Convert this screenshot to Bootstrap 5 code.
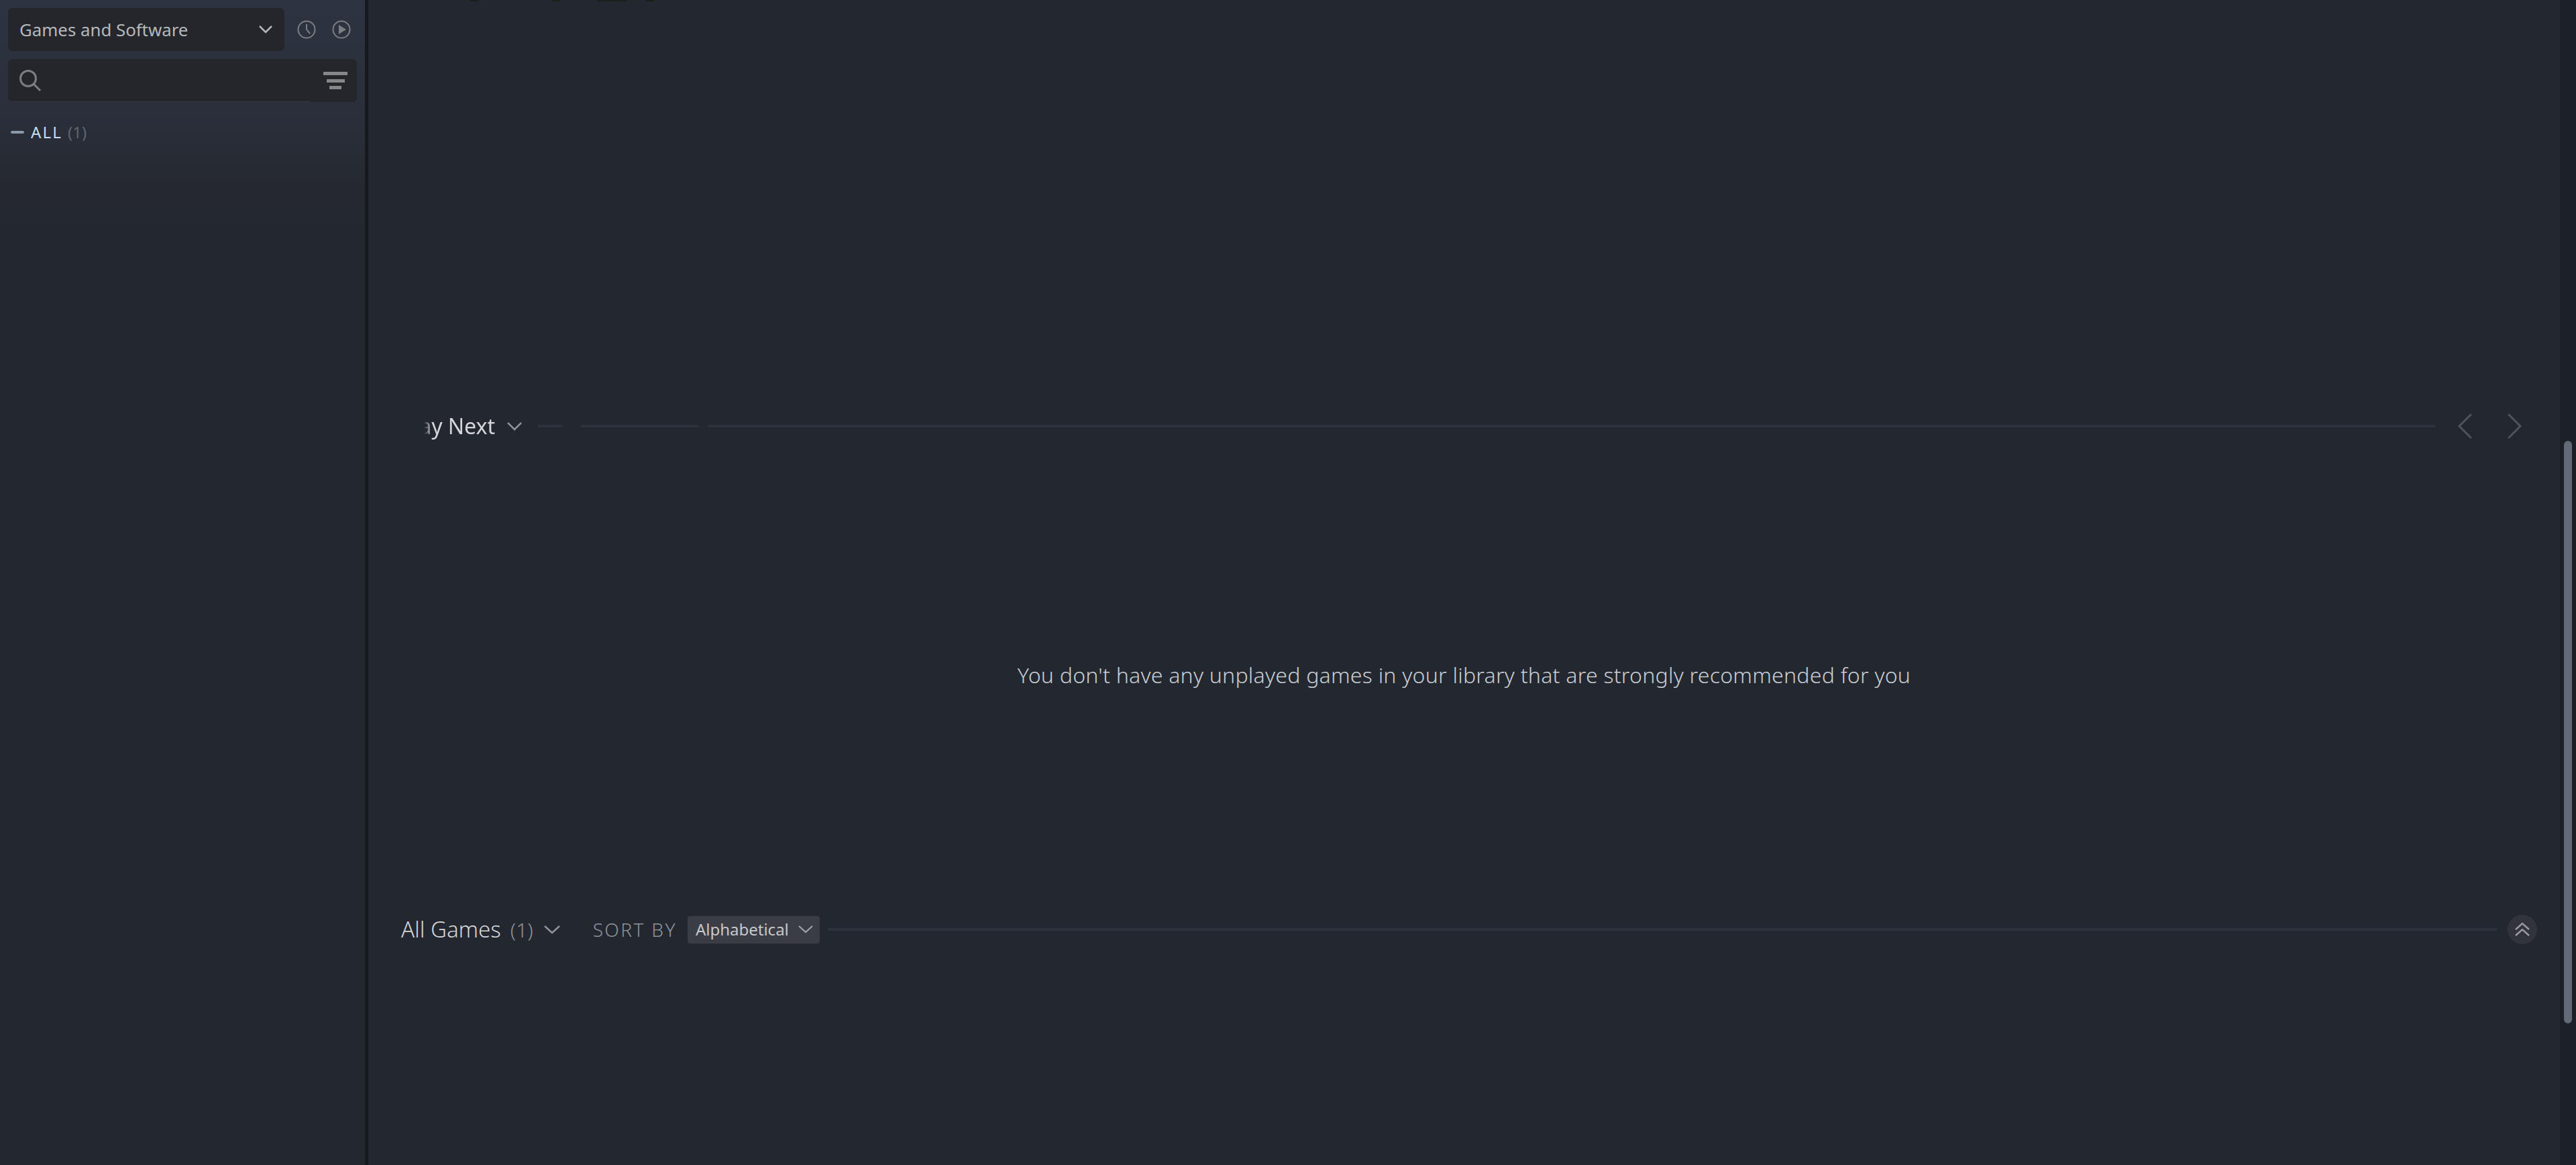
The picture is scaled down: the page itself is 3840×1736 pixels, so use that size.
<!DOCTYPE html>
<html lang="en">
<head>
    <meta charset="UTF-8">
    <meta name="viewport" content="width=device-width, initial-scale=1.0">
    <title>Library</title>
    <link href="https://cdn.jsdelivr.net/npm/bootstrap@5.3.2/dist/css/bootstrap.min.css" rel="stylesheet">
    <style>
        html, body { height: 100%; }
        body {
            background: #23272f;
            font-family: "Noto Sans", "Liberation Sans", sans-serif;
            overflow: hidden;
        }
        .app-shell { height: 1736px; }
        .side-panel {
            width: 544px;
            padding: 12px 12px 0;
            background: linear-gradient(180deg, #2d3340 0, #2a2f3b 170px, #25292f 280px, #23272f 360px, #23272f 100%);
        }
        .side-rule { width: 5px; background: #16181c; }
        .select-box {
            width: 412px;
            height: 64px;
            padding: 0 18px 0 17px;
            background: #24262c;
            border-radius: 6px;
            color: #b5b8bb;
            font-size: 25.8px;
        }
        .head-icons { gap: 24px; padding-left: 19px; }
        .search-box {
            width: 520px;
            height: 64px;
            margin-top: 12px;
            padding: 0 14px 0 16px;
            background: linear-gradient(90deg, #343944 450px, #24262c 450px) bottom / 100% 1px no-repeat, #24262c;
            border-radius: 6px;
        }
        .tree-row {
            margin-top: 31px;
            padding-left: 4px;
            font-size: 24px;
            line-height: 28px;
        }
        .tree-dash { width: 20px; height: 4px; margin-right: 10px; border-radius: 2px; background: #8b98a8; }
        .tree-name { color: #c5dcf2; letter-spacing: 2.2px; }
        .tree-count { color: #5e6570; margin-left: 8px; }
        .top-gap {
            height: 600px;
            background: linear-gradient(90deg, transparent 152px, #17201b 152px, #17201b 164px, transparent 164px, transparent 274px, #17201b 274px, #17201b 286px, transparent 286px, transparent 340px, #17201b 340px, #17201b 386px, transparent 386px, transparent 414px, #17201b 414px, #17201b 426px, transparent 426px) top / 100% 2px no-repeat;
        }
        .next-row { height: 70px; padding-left: 83px; }
        .clip-title {
            width: 106px;
            overflow: hidden;
            direction: rtl;
            white-space: nowrap;
            color: #d4d6d8;
            font-size: 32px;
            -webkit-mask-image: linear-gradient(90deg, transparent 0, #000 12px);
        }
        .title-chevron { margin-left: 18px; }
        .rule-line { height: 4px; background: #2e323c; }
        .rule-broken {
            background: linear-gradient(90deg, #2e323c 34px, transparent 38px, transparent 62px, #2e323c 66px, #2e323c 238px, transparent 240px, transparent 252px, #2e323c 254px);
        }
        .arrow-prev { margin-left: 33px; margin-right: 53px; }
        .arrow-next { margin-right: 56px; }
        .empty-note {
            height: 680px;
            color: #c8cdd3;
            font-size: 32px;
            font-weight: 300;
            letter-spacing: .26px;
            padding-bottom: 8px;
        }
        .games-row { height: 70px; padding-left: 49px; }
        .games-title { color: #d4d6d8; font-size: 33px; font-weight: 300; }
        .games-count { color: #8f9297; font-size: 30px; font-weight: 300; margin-left: 14px; }
        .sort-label { color: #8f9297; font-size: 28px; font-weight: 300; letter-spacing: 2.4px; margin-left: 49px; }
        .sort-pill {
            height: 41px;
            margin-left: 16px;
            padding: 0 10px 0 12px;
            background: #3a3d46;
            border-radius: 4px;
            color: #c6c8cb;
            font-size: 24px;
        }
        .pill-chevron { margin-left: 14px; }
        .games-rule { margin-left: 12px; }
        .round-btn { width: 44px; height: 44px; margin: 0 34px 0 16px; border-radius: 50%; background: #31343d; }
        .scroll-track { width: 24px; padding: 657px 6px 0; background: #1c2027; }
        .scroll-thumb { height: 868px; border-radius: 6px; background: #646b78; }
    </style>
</head>
<body>
    <div class="app-shell d-flex">
        <aside class="side-panel flex-shrink-0">
            <div class="d-flex align-items-center">
                <div class="select-box d-flex align-items-center justify-content-between">
                    <span>Games and Software</span>
                    <svg width="20" height="14" viewBox="0 0 20 14" fill="none" stroke="#b5b8bb" stroke-width="2.5"><path d="M1 2l9 9 9-9"/></svg>
                </div>
                <div class="head-icons d-flex align-items-center">
                    <svg width="28" height="28" viewBox="0 0 28 28" fill="none" stroke="#7c7e82" stroke-width="2"><circle cx="14" cy="14" r="12.5"/><path d="M14 6v8l5 6"/></svg>
                    <svg width="28" height="28" viewBox="0 0 28 28" fill="none" stroke="#7c7e82" stroke-width="2"><circle cx="14" cy="14" r="12.5"/><path d="M10 7l11 7-11 7z" fill="#7c7e82" stroke="none"/></svg>
                </div>
            </div>
            <div class="search-box d-flex align-items-center justify-content-between">
                <svg width="34" height="34" viewBox="0 0 34 34" fill="none" stroke="#7c7e82" stroke-width="3"><circle cx="14" cy="14" r="11.5"/><path d="M22 22l10 10"/></svg>
                <svg width="36" height="26" viewBox="0 0 36 26" fill="#85878a"><path d="M0 0h36v5H0zM5 11h27v5H5zM9 21h18v5H9z"/></svg>
            </div>
            <div class="tree-row d-flex align-items-center">
                <span class="tree-dash"></span>
                <span class="tree-name">ALL</span>
                <span class="tree-count">(1)</span>
            </div>
        </aside>
        <div class="side-rule flex-shrink-0"></div>
        <main class="flex-grow-1 d-flex">
            <div class="flex-grow-1">
                <div class="top-gap"></div>
                <div class="next-row d-flex align-items-center">
                    <div class="clip-title"><bdi>Play Next</bdi></div>
                    <svg class="title-chevron" width="22" height="14" viewBox="0 0 22 14" fill="none" stroke="#8f9297" stroke-width="2.5"><path d="M1 2l10 10L21 2"/></svg>
                    <div class="rule-line rule-broken flex-grow-1 ms-4"></div>
                    <svg class="arrow-prev" width="22" height="38" viewBox="0 0 22 38" fill="none" stroke="#4f535c" stroke-width="3" stroke-linecap="round"><path d="M20 2L3 19l17 17"/></svg>
                    <svg class="arrow-next" width="22" height="38" viewBox="0 0 22 38" fill="none" stroke="#4f535c" stroke-width="3" stroke-linecap="round"><path d="M2 2l17 17L2 36"/></svg>
                </div>
                <div class="empty-note d-flex align-items-center justify-content-center">You don't have any unplayed games in your library that are strongly recommended for you</div>
                <div class="games-row d-flex align-items-center">
                    <span class="games-title">All Games</span>
                    <span class="games-count">(1)</span>
                    <svg class="ms-3" width="24" height="14" viewBox="0 0 24 14" fill="none" stroke="#8f9297" stroke-width="2.5"><path d="M1 2l11 10L23 2"/></svg>
                    <span class="sort-label">SORT BY</span>
                    <div class="sort-pill d-flex align-items-center">
                        <span>Alphabetical</span>
                        <svg class="pill-chevron" width="22" height="12" viewBox="0 0 22 12" fill="none" stroke="#a0a2a6" stroke-width="2.2"><path d="M1 1l10 9 10-9"/></svg>
                    </div>
                    <div class="rule-line games-rule flex-grow-1"></div>
                    <div class="round-btn d-flex align-items-center justify-content-center">
                        <svg width="22" height="22" viewBox="0 0 22 22" fill="none" stroke="#9a9ca0" stroke-width="2.4"><path d="M1 11L11 2l10 9M1 20l10-9 10 9"/></svg>
                    </div>
                </div>
            </div>
            <div class="scroll-track flex-shrink-0"><div class="scroll-thumb"></div></div>
        </main>
    </div>
</body>
</html>
